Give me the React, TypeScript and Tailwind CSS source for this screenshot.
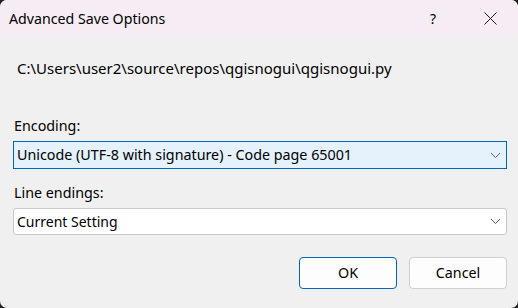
import React from "react";

const Chevron = () => (
  <svg width="11" height="7" viewBox="0 0 11 7" fill="none">
    <path d="M1 1 L5.5 5.5 L10 1" stroke="#5f5f5f" strokeWidth="1" />
  </svg>
);

export default function App() {
  return (
    <div
      className="w-[518px] h-[308px] bg-[#202020] overflow-hidden"
      style={{ fontFamily: '"Noto Sans", "Open Sans", sans-serif' }}
    >
      <div className="w-full h-full bg-[#f0f0f0] rounded-[7px] overflow-hidden flex flex-col text-black">
        <div className="h-[37px] bg-[#f6edf4] flex items-center shrink-0">
          <span className="pl-[9px] text-[14.2px] leading-[20px] pt-[1px]">Advanced Save Options</span>
          <span className="ml-auto w-[46px] flex justify-center text-[14px] mr-[11px]">?</span>
          <span className="w-[46px] flex justify-center mr-[5px]">
            <svg width="13" height="13" viewBox="0 0 13 13">
              <path d="M0.5 0.5 L12.5 12.5 M12.5 0.5 L0.5 12.5" stroke="#1a1a1a" strokeWidth="1" />
            </svg>
          </span>
        </div>
        <div className="flex flex-col px-[13px] pr-[11px]">
          <div className="mt-[21px] pl-[4px] text-[15px] leading-[20px]">
            C:\Users\user2\source\repos\qgisnogui\qgisnogui.py
          </div>
          <div className="mt-[38px] pl-[1px] text-[14.3px] leading-[20px]">Encoding:</div>
          <div className="mt-[5px] h-[28px] border border-[#0067c0] bg-[#e5f1fb] flex items-center pl-[3px] pr-[5px]">
            <span className="text-[14.3px]">Unicode (UTF-8 with signature) - Code page 65001</span>
            <span className="ml-auto flex"><Chevron /></span>
          </div>
          <div className="mt-[14px] pl-[1px] text-[14.3px] leading-[20px]">Line endings:</div>
          <div className="mt-[5px] h-[27px] border border-[#c8c8c8] bg-white rounded-[3px] flex items-center pl-[3px] pr-[5px]">
            <span className="text-[14px]">Current Setting</span>
            <span className="ml-auto flex"><Chevron /></span>
          </div>
          <div className="mt-[22px] flex justify-end gap-[12px]">
            <button className="w-[98px] h-[32px] border border-[#0067c0] rounded-[4px] bg-[#fdfdfd] text-[14.3px]">OK</button>
            <button className="w-[98px] h-[32px] border border-[#d0d0d0] rounded-[4px] bg-[#fdfdfd] text-[14.3px]">Cancel</button>
          </div>
        </div>
      </div>
    </div>
  );
}
